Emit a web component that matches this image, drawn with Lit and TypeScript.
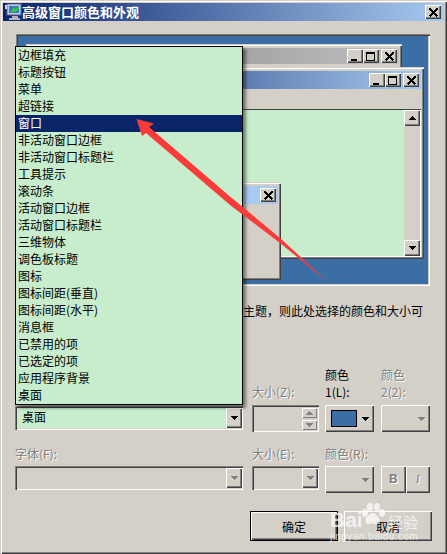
import { LitElement, html, css, svg } from "lit";
import { customElement } from "lit/decorators.js";

const ITEMS = ["边框填充","标题按钮","菜单","超链接","窗口","非活动窗口边框","非活动窗口标题栏","工具提示","滚动条","活动窗口边框","活动窗口标题栏","三维物体","调色板标题","图标","图标间距(垂直)","图标间距(水平)","消息框","已禁用的项","已选定的项","应用程序背景","桌面"];

const closeIcon = html`<svg class="g" width="11" height="9" viewBox="0 0 11 9"><path d="M1.5 0.5L9.5 8.5M9.5 0.5L1.5 8.5" stroke="#000" stroke-width="2" fill="none"/></svg>`;
const minIcon = html`<svg class="g" width="10" height="9" viewBox="0 0 10 9"><rect x="1" y="7" width="6" height="2" fill="#000"/></svg>`;
const maxIcon = html`<svg class="g" width="10" height="9" viewBox="0 0 10 9"><path d="M0 0h9v9H0zM1 2v6h7V2z" fill="#000" fill-rule="evenodd"/></svg>`;
const up = (c = "#000") => html`<svg class="g" width="7" height="4" viewBox="0 0 7 4"><path d="M3 0h1v1h1v1h1v1h1v1H0V3h1V2h1V1h1z" fill=${c}/></svg>`;
const down = (c = "#000") => html`<svg class="g" width="7" height="4" viewBox="0 0 7 4"><path d="M0 0h7v1H6v1H5v1H4v1H3V3H2V2H1V1H0z" fill=${c}/></svg>`;

@customElement("app-root")
export class AppRoot extends LitElement {
  static styles = css`
    :host { display: block; width: 447px; height: 554px; overflow: hidden; font-family: "Noto Sans CJK SC", "Liberation Sans", sans-serif; font-size: 12px; line-height: 17px; color: #000; }
    * { box-sizing: border-box; }
    .g { display: block; shape-rendering: crispEdges; }
    .dialog { position: relative; width: 447px; height: 554px; background: #d4d0c8; padding: 3px; display: flex; flex-direction: column;
      box-shadow: inset 1px 1px 0 #d4d0c8, inset 2px 2px 0 #fff, inset -1px -1px 0 #404040, inset -2px -2px 0 #808080; }
    .title { height: 18px; flex: none; display: flex; align-items: center; padding: 0 3px 0 2px; background: linear-gradient(90deg, #0a246a, #a6caf0); color: #fff; font-weight: 700; font-size: 13px; line-height: 18px; }
    .title .name { flex: 1; }
    .tbtn { width: 16px; height: 14px; flex: none; display: flex; align-items: center; justify-content: center; background: #d4d0c8;
      box-shadow: inset 1px 1px 0 #fff, inset -1px -1px 0 #404040, inset -2px -2px 0 #808080; }
    .body { flex: 1; padding: 13px 12px 0 13px; display: flex; flex-direction: column; }
    .preview { position: relative; flex: none; width: 414px; height: 252px; background: #3a6ea5; box-shadow: inset 1px 1px 0 #808080, inset 2px 2px 0 #404040, inset -1px -1px 0 #fff, inset -2px -2px 0 #d4d0c8; }
    .win { position: absolute; background: #d4d0c8; padding: 4px 3px 3px 3px; box-shadow: inset 1px 1px 0 #d4d0c8, inset 2px 2px 0 #fff, inset -1px -1px 0 #404040, inset -2px -2px 0 #808080; }
    .inactive { left: 10px; top: 10px; width: 376px; height: 130px; }
    .active { left: 19px; top: 33px; width: 389px; height: 192px; }
    .msg { left: 140px; top: 148px; width: 125px; height: 98px; }
    .wt { display: flex; justify-content: flex-end; align-items: center; padding-right: 2px; }
    .inactive .wt { height: 16px; background: linear-gradient(90deg, #808080, #c0c0c0); }
    .active .wt, .msg .wt { height: 18px; background: linear-gradient(90deg, #0a246a, #a6caf0); }
    .msg .wt { background: #a6caf0; }
    .sp { width: 2px; flex: none; }
    .content { position: absolute; left: 0; right: 3px; top: 42px; height: 148px; display: flex; background: #fff; box-shadow: inset 0 1px 0 #404040; padding: 1px 1px 1px 0; }
    .green { flex: 1; background: #c7edcc; }
    .scroll { width: 16px; flex: none; background: #d4d0c8; display: flex; flex-direction: column; justify-content: space-between; }
    .sbtn { height: 16px; display: flex; align-items: center; justify-content: center; background: #d4d0c8; box-shadow: inset 1px 1px 0 #fff, inset -1px -1px 0 #404040, inset -2px -2px 0 #808080; }
    .caption { margin-top: 17px; padding-right: 9px; height: 17px; line-height: 15px; text-align: right; white-space: nowrap; }
    .controls { display: grid; grid-template-columns: 237px 73px 56px 49px; margin: 47px 0 0 -1px; }
    .lab { height: 34px; display: flex; flex-direction: column; justify-content: flex-end; }
    .lab span { display: block; height: 17px; line-height: 15px; }
    .lab.two { height: 17px; margin-top: 14px; }
    .off { color: #808080; text-shadow: 1px 1px 0 #fff; }
    .ctl { height: 27px; margin-top: 4px; position: relative; }
    .ctl.second { margin-top: 3px; }
    .sunken { height: 24px; display: flex; justify-content: flex-end; align-items: center; padding: 2px 1px 2px 2px; box-shadow: inset 1px 1px 0 #808080, inset 2px 2px 0 #404040, inset -1px -1px 0 #fff, inset -2px -2px 0 #d4d0c8; }
    .w228 { width: 228px; } .w67 { width: 67px; } .w49 { width: 49px; }
    .tall { height: 27px; }
    .mt1 { margin-top: 1px; }
    .val { flex: 1; padding: 0 0 3px 5px; background: #c7edcc; height: 100%; display: flex; align-items: center; }
    .cbtn { width: 16px; height: 20px; flex: none; display: flex; align-items: center; justify-content: center; background: #d4d0c8; box-shadow: inset 1px 1px 0 #fff, inset -1px -1px 0 #404040, inset -2px -2px 0 #808080; }
    .spin { display: flex; flex-direction: column; gap: 2px; flex: none; margin-right: 1px; }
    .spin div { width: 15px; height: 10px; display: flex; align-items: center; justify-content: center; background: #d4d0c8; box-shadow: inset 1px 1px 0 #fff, inset -1px -1px 0 #808080; }
    .raised { height: 27px; width: 49px; display: flex; align-items: center; justify-content: flex-end; gap: 5px; padding: 0 5px 0 6px; background: #d4d0c8; box-shadow: inset 1px 1px 0 #fff, inset -1px -1px 0 #404040, inset -2px -2px 0 #808080; }
    .swatch { width: 26px; height: 17px; background: #3a6ea5; border: 1px solid #000; flex: none; }
    .bi { display: flex; gap: 0; }
    .bi .raised { width: 25px; justify-content: center; padding: 0; font-weight: 700; font-family: "Liberation Sans", sans-serif; }
    .bi .i { font-style: italic; font-weight: 400; font-family: "Liberation Serif", serif; }
    .actions { display: flex; justify-content: flex-end; gap: 6px; margin-top: 18px; }
    .btn { width: 88px; height: 30px; display: flex; align-items: center; justify-content: center; background: #d4d0c8; box-shadow: inset 1px 1px 0 #fff, inset -1px -1px 0 #404040, inset -2px -2px 0 #808080; font-size: 12px; }
    .btn.def { box-shadow: inset 0 0 0 1px #000, inset 2px 2px 0 #fff, inset -2px -2px 0 #404040, inset -3px -3px 0 #808080; }
    .list { position: absolute; left: 15px; top: 46px; width: 228px; height: 359px; background: #c7edcc; border: 1px solid #000; box-shadow: 3px 3px 3px rgba(0,0,0,.45); }
    .row { height: 17px; line-height: 15px; padding-left: 2px; white-space: nowrap; }
    .row.sel { background: #0a246a; color: #fff; }
    .arrow { position: absolute; left: 0; top: 0; width: 447px; height: 554px; pointer-events: none; }
    .mark { position: absolute; left: 330px; top: 503px; width: 92px; height: 40px; pointer-events: none; color: rgba(255,255,255,.72); font-family: "Liberation Sans", sans-serif; }
    .bai { position: absolute; left: 0; top: 6px; font-size: 21px; line-height: 22px; font-weight: 700; }
    .jy { position: absolute; left: 58px; top: 10px; font-size: 15px; line-height: 18px; font-family: "Noto Sans CJK SC", sans-serif; letter-spacing: 0; }
    .url { position: absolute; left: 0; top: 28px; font-size: 10px; line-height: 12px; letter-spacing: .45px; white-space: nowrap; }
    .paw { position: absolute; left: 30px; top: 0; }
  `;

  render() {
    const monitor = svg`<rect x="2" y="1" width="14" height="11" fill="#c8c8d8" stroke="#5a6a90"/><rect x="4" y="3" width="10" height="7" fill="#2f7fc8"/><path d="M5 9l4-5 1 2 4-3v3l-4 3H6z" fill="#3cc04a"/><path d="M7 13h6v2H7zM4 15h11v2H4z" fill="#b0b4bc"/><rect x="0" y="2" width="2" height="4" fill="#d0d8e8"/>`;
    return html`
      <div class="dialog">
        <div class="title">
          <svg width="17" height="18" viewBox="0 0 17 18">${monitor}</svg>
          <span class="name">高级窗口颜色和外观</span>
          <div class="tbtn">${closeIcon}</div>
        </div>
        <div class="body">
          <div class="preview">
            <div class="win inactive">
              <div class="wt"><div class="tbtn">${minIcon}</div><div class="tbtn">${maxIcon}</div><div class="sp"></div><div class="tbtn">${closeIcon}</div></div>
            </div>
            <div class="win active">
              <div class="wt"><div class="tbtn">${minIcon}</div><div class="tbtn">${maxIcon}</div><div class="sp"></div><div class="tbtn">${closeIcon}</div></div>
              <div class="content">
                <div class="green"></div>
                <div class="scroll"><div class="sbtn">${up()}</div><div class="sbtn">${down()}</div></div>
              </div>
            </div>
            <div class="win msg">
              <div class="wt"><div class="tbtn">${closeIcon}</div></div>
            </div>
          </div>
          <div class="caption">主题，则此处选择的颜色和大小可</div>
          <div class="controls">
            <div class="lab"></div>
            <div class="lab off"><span>大小(Z):</span></div>
            <div class="lab"><span>颜色</span><span>1(L):</span></div>
            <div class="lab off"><span>颜色</span><span>2(2):</span></div>

            <div class="ctl"><div class="sunken w228 mt1"><div class="val">桌面</div><div class="cbtn">${down()}</div></div></div>
            <div class="ctl"><div class="sunken w67 tall"><div class="spin"><div>${up("#808080")}</div><div>${down("#808080")}</div></div></div></div>
            <div class="ctl"><div class="raised"><div class="swatch"></div>${down()}</div></div>
            <div class="ctl"><div class="raised">${down("#808080")}</div></div>

            <div class="lab two off"><span>字体(F):</span></div>
            <div class="lab two off"><span>大小(E):</span></div>
            <div class="lab two off"><span>颜色(R):</span></div>
            <div class="lab two"></div>

            <div class="ctl second"><div class="sunken w228"><div class="cbtn">${down("#808080")}</div></div></div>
            <div class="ctl second"><div class="sunken w67"><div class="cbtn">${down("#808080")}</div></div></div>
            <div class="ctl second"><div class="raised">${down("#808080")}</div></div>
            <div class="ctl second"><div class="bi"><div class="raised off">B</div><div class="raised off i">I</div></div></div>
          </div>
          <div class="actions">
            <div class="btn def">确定</div>
            <div class="btn">取消</div>
          </div>
        </div>
        <div class="list">
          ${ITEMS.map((t, i) => html`<div class="row ${i === 4 ? "sel" : ""}">${t}</div>`)}
        </div>
        <svg class="arrow" viewBox="0 0 447 554"><polygon points="136.5,119 154,123.5 149,127 230,196.5 280,238 329,283 280,243 230,205 146,133 142,136" fill="#fb3a3a"/></svg>
        <div class="mark">
          <span class="bai">Bai</span>
          <svg class="paw" width="26" height="24" viewBox="0 0 26 24" fill="currentColor"><ellipse cx="5" cy="10" rx="3" ry="4"/><ellipse cx="10" cy="4" rx="3" ry="4"/><ellipse cx="17" cy="4" rx="3" ry="4"/><ellipse cx="22" cy="10" rx="3" ry="4"/><path d="M13 10c3 0 4 3 6 5s1 6-3 6c-2 0-4-1-6 0-4 1-6-3-4-6 2-2 4-5 7-5z"/></svg>
          <span class="jy">经验</span>
          <span class="url">jingyan.baidu.com</span>
        </div>
      </div>
    `;
  }
}
